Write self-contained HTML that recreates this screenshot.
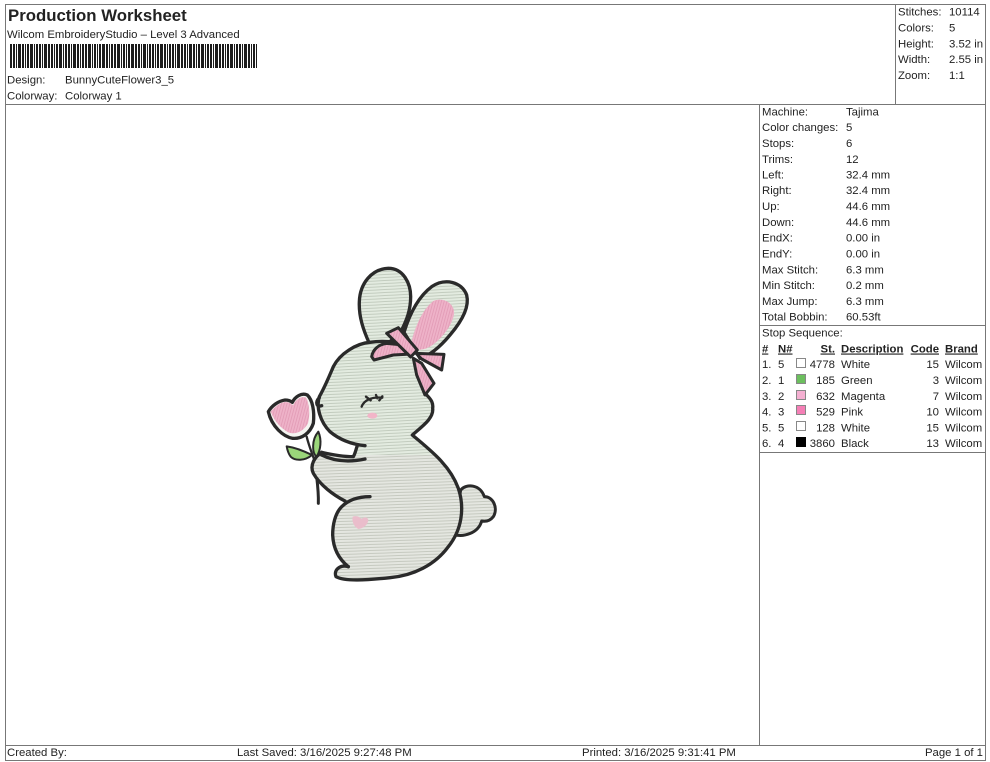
<!DOCTYPE html>
<html>
<head>
<meta charset="utf-8">
<title>Production Worksheet</title>
<style>
html,body{margin:0;padding:0;background:#fff;width:990px;height:762px;overflow:hidden}
svg{display:block}
text{font-family:"Liberation Sans",Arial,sans-serif;font-size:11.35px;fill:#222}
.b{font-weight:bold}
.e{text-anchor:end}
.u{text-decoration:underline;font-weight:bold}
</style>
</head>
<body>
<svg width="990" height="762" viewBox="0 0 990 762" xmlns="http://www.w3.org/2000/svg">
<defs>
<pattern id="st" width="12" height="9" patternUnits="userSpaceOnUse" patternTransform="rotate(-3)">
<rect width="12" height="9" fill="#e3ebe0"/>
<rect y="6.5" width="12" height="2.5" fill="#bcc6b8"/>
</pattern>
<pattern id="st2" width="12" height="9" patternUnits="userSpaceOnUse" patternTransform="rotate(-2)">
<rect width="12" height="9" fill="#e4e6e0"/>
<rect y="6.5" width="12" height="2.5" fill="#c0c4ba"/>
</pattern>
<pattern id="pk" width="8" height="8" patternUnits="userSpaceOnUse" patternTransform="rotate(15)">
<rect width="8" height="8" fill="#eeb2c8"/>
<rect x="5.5" width="2.5" height="8" fill="#e29bb6"/>
</pattern>
<clipPath id="low"><rect x="0" y="600" width="800" height="420"/></clipPath>
</defs>

<!-- frame -->
<g fill="none" stroke="#777" stroke-width="1">
<rect x="5.5" y="4.5" width="980" height="756"/>
<path d="M5 104.5H986M895.5 4V104M759.5 104V745M5 745.5H986M760 325.5H986M760 452.5H986"/>
</g>

<!-- header -->
<text class="b" x="8" y="21" style="font-size:16.8px">Production Worksheet</text>
<text x="7" y="38">Wilcom EmbroideryStudio – Level 3 Advanced</text>
<line x1="10" y1="56" x2="257" y2="56" stroke="#1c1c1c" stroke-width="24" stroke-dasharray="2 1 2 1 1 1 3 1 2 1 1 1 2 1 3 1 1 1 2 1 2 1 1 1 3 1 2 1 2 1 1 1 2 1 3 1 1 1 2 1 2 1 1 1 3 1 2 1 1 1 2 1 2 1 3 1 1 1 2 1 1 1 2 1 3 1 2 1 1 1 2 1 2 1 3 1 1 1 2 1 1 1 2 1 3 1 2 1 2 1 1 1 3 1 1 1 2 1 2 1 1 1 2 1 3 1 2 1 1 1 2 1 2 1 1 1 3 1"/>
<text x="7" y="83.5">Design:</text><text x="65" y="83.5">BunnyCuteFlower3_5</text>
<text x="7" y="99.5">Colorway:</text><text x="65" y="99.5">Colorway 1</text>

<!-- stats -->
<text x="898" y="15.5">Stitches:</text><text x="949" y="15.5">10114</text>
<text x="898" y="31.5">Colors:</text><text x="949" y="31.5">5</text>
<text x="898" y="47.5">Height:</text><text x="949" y="47.5">3.52 in</text>
<text x="898" y="63">Width:</text><text x="949" y="63">2.55 in</text>
<text x="898" y="79">Zoom:</text><text x="949" y="79">1:1</text>

<!-- machine -->
<text x="762" y="115.5">Machine:</text><text x="846" y="115.5">Tajima</text>
<text x="762" y="131">Color changes:</text><text x="846" y="131">5</text>
<text x="762" y="147">Stops:</text><text x="846" y="147">6</text>
<text x="762" y="163">Trims:</text><text x="846" y="163">12</text>
<text x="762" y="178.5">Left:</text><text x="846" y="178.5">32.4 mm</text>
<text x="762" y="194">Right:</text><text x="846" y="194">32.4 mm</text>
<text x="762" y="210">Up:</text><text x="846" y="210">44.6 mm</text>
<text x="762" y="226">Down:</text><text x="846" y="226">44.6 mm</text>
<text x="762" y="241.5">EndX:</text><text x="846" y="241.5">0.00 in</text>
<text x="762" y="257.5">EndY:</text><text x="846" y="257.5">0.00 in</text>
<text x="762" y="273.5">Max Stitch:</text><text x="846" y="273.5">6.3 mm</text>
<text x="762" y="289">Min Stitch:</text><text x="846" y="289">0.2 mm</text>
<text x="762" y="305">Max Jump:</text><text x="846" y="305">6.3 mm</text>
<text x="762" y="320.5">Total Bobbin:</text><text x="846" y="320.5">60.53ft</text>

<!-- stop sequence -->
<text x="762" y="336.5">Stop Sequence:</text>
<text class="u" x="762" y="352.5">#</text><text class="u" x="778" y="352.5">N#</text><text class="u e" x="835" y="352.5">St.</text><text class="u" x="841" y="352.5">Description</text><text class="u e" x="939" y="352.5">Code</text><text class="u" x="945" y="352.5">Brand</text>

<text x="762" y="368">1.</text><text x="778" y="368">5</text><text class="e" x="835" y="368">4778</text><text x="841" y="368">White</text><text class="e" x="939" y="368">15</text><text x="945" y="368">Wilcom</text>
<text x="762" y="384">2.</text><text x="778" y="384">1</text><text class="e" x="835" y="384">185</text><text x="841" y="384">Green</text><text class="e" x="939" y="384">3</text><text x="945" y="384">Wilcom</text>
<text x="762" y="400">3.</text><text x="778" y="400">2</text><text class="e" x="835" y="400">632</text><text x="841" y="400">Magenta</text><text class="e" x="939" y="400">7</text><text x="945" y="400">Wilcom</text>
<text x="762" y="415.5">4.</text><text x="778" y="415.5">3</text><text class="e" x="835" y="415.5">529</text><text x="841" y="415.5">Pink</text><text class="e" x="939" y="415.5">10</text><text x="945" y="415.5">Wilcom</text>
<text x="762" y="431.5">5.</text><text x="778" y="431.5">5</text><text class="e" x="835" y="431.5">128</text><text x="841" y="431.5">White</text><text class="e" x="939" y="431.5">15</text><text x="945" y="431.5">Wilcom</text>
<text x="762" y="447">6.</text><text x="778" y="447">4</text><text class="e" x="835" y="447">3860</text><text x="841" y="447">Black</text><text class="e" x="939" y="447">13</text><text x="945" y="447">Wilcom</text>

<g stroke="#888" stroke-width="1">
<rect x="796.5" y="358.5" width="9" height="9" fill="#fff"/>
<rect x="796.5" y="374.5" width="9" height="9" fill="#6cbf5e"/>
<rect x="796.5" y="390.5" width="9" height="9" fill="#f5b0d2"/>
<rect x="796.5" y="405.5" width="9" height="9" fill="#f57fb6"/>
<rect x="796.5" y="421.5" width="9" height="9" fill="#fff"/>
<rect x="796.5" y="437.5" width="9" height="9" fill="#000" stroke="#000"/>
</g>

<!-- footer -->
<text x="7" y="756">Created By:</text>
<text x="237" y="756">Last Saved: 3/16/2025 9:27:48 PM</text>
<text x="582" y="756">Printed: 3/16/2025 9:31:41 PM</text>
<text class="e" x="983" y="756">Page 1 of 1</text>

<!-- bunny: coords are 3x around origin 250,255 -->
<g transform="translate(250 255) scale(.33333)" stroke-linejoin="round" stroke-linecap="round">
<!-- ears -->
<path d="M358 265C340 225 326 185 328 140C330 85 365 42 415 40C460 40 482 85 482 125C482 165 470 195 455 225L415 265Z" fill="url(#st)" stroke="#2a2a2a" stroke-width="10"/>
<path d="M462 232C478 180 505 125 545 95C585 68 635 80 650 120C660 160 630 205 600 240C575 270 545 300 510 310Z" fill="url(#st)" stroke="#2a2a2a" stroke-width="10"/>
<path d="M482 275C490 225 515 165 550 138C580 125 615 145 612 178C605 215 575 250 545 272C525 285 500 290 482 275Z" fill="url(#pk)"/>

<!-- tail -->
<path d="M632 705C650 685 690 688 703 725C730 725 745 760 730 785C718 800 705 800 695 798C685 835 640 848 610 838Z" fill="url(#st2)" stroke="#2a2a2a" stroke-width="9"/>

<!-- stem below arm -->
<path d="M200 665C203 690 206 715 205 745" fill="none" stroke="#2a2a2a" stroke-width="9"/>

<!-- body + head silhouette -->
<path d="M360 262C320 265 270 295 250 335C235 370 225 395 208 425C198 455 210 500 240 530C270 555 305 568 345 572L322 572L310 605L215 592C195 605 178 630 190 655C210 690 250 720 285 738C262 760 248 800 248 840C250 885 270 915 295 935C270 928 250 945 258 965C285 980 350 975 420 968C490 962 555 930 595 875C635 825 645 760 625 700C600 630 540 585 487 540C515 515 552 490 548 455C540 430 525 410 518 390L495 310C470 280 420 258 360 262Z" fill="#dde3d9"/>
<path d="M360 262C320 265 270 295 250 335C235 370 225 395 208 425C198 455 210 500 240 530C270 555 305 568 345 572L322 572L310 605L215 592C195 605 178 630 190 655C210 690 250 720 285 738C262 760 248 800 248 840C250 885 270 915 295 935C270 928 250 945 258 965C285 980 350 975 420 968C490 962 555 930 595 875C635 825 645 760 625 700C600 630 540 585 487 540C515 515 552 490 548 455C540 430 525 410 518 390L495 310C470 280 420 258 360 262Z" fill="url(#st)"/>
<path d="M360 262C320 265 270 295 250 335C235 370 225 395 208 425C198 455 210 500 240 530C270 555 305 568 345 572L322 572L310 605L215 592C195 605 178 630 190 655C210 690 250 720 285 738C262 760 248 800 248 840C250 885 270 915 295 935C270 928 250 945 258 965C285 980 350 975 420 968C490 962 555 930 595 875C635 825 645 760 625 700C600 630 540 585 487 540C515 515 552 490 548 455C540 430 525 410 518 390L495 310C470 280 420 258 360 262Z" fill="url(#st2)" clip-path="url(#low)"/>

<!-- outlines -->
<g fill="none" stroke="#2a2a2a" stroke-width="10">
<path d="M440 262C410 258 385 258 360 262C320 265 270 295 250 335C235 370 225 395 208 425C198 455 210 500 240 530C270 555 305 568 345 572"/>
<path d="M530 420C545 435 550 445 548 460C552 490 515 515 487 540C540 585 600 630 625 700C645 760 635 825 595 875C555 930 490 962 420 968C350 975 285 980 258 965C250 945 270 928 295 935"/>
<path d="M360 725C325 725 295 735 275 755C255 775 248 810 248 840C250 885 270 915 295 935"/>
<path d="M215 592C250 600 280 605 310 605C316 595 318 582 322 572"/>
<path d="M215 600C245 615 285 625 345 612"/>
<path d="M215 592C195 605 178 630 190 655C210 690 250 720 285 738"/>
</g>

<!-- tulip -->
<path d="M55 470C65 452 85 438 105 435C115 435 122 438 127 442C135 425 155 412 172 420C188 435 194 470 190 505C180 535 155 552 128 550C100 545 65 515 55 470Z" fill="#f4f5f1" stroke="#2a2a2a" stroke-width="10"/>
<path d="M62 470C75 454 92 442 106 441C116 441 124 446 129 451C137 434 153 422 168 428C178 445 181 478 174 505C160 530 135 540 115 532C92 520 72 497 62 470Z" fill="url(#pk)"/>
<path d="M170 545C176 570 184 590 192 612" fill="none" stroke="#2a2a2a" stroke-width="7"/>

<!-- leaves -->
<path d="M205 530C216 555 212 585 200 605C186 595 184 555 205 530Z" fill="#9bd67a" stroke="#2a2a2a" stroke-width="6"/>
<path d="M110 574C140 578 170 592 186 600C165 618 135 618 122 605C115 596 112 585 110 574Z" fill="#9bd67a" stroke="#2a2a2a" stroke-width="6"/>
<path d="M208 428C196 440 198 458 215 452" fill="none" stroke="#2a2a2a" stroke-width="10"/>

<!-- eye -->
<path d="M335 455C342 435 365 425 397 428M348 425L362 436M378 420L382 430M397 424L388 436" fill="none" stroke="#2a2a2a" stroke-width="7"/>
<ellipse cx="367" cy="482" rx="15" ry="9" fill="#f2b5c8"/>
<!-- belly heart -->
<path d="M308 785C322 780 330 788 335 792C345 782 358 788 354 800C350 812 340 820 325 822C312 815 305 800 308 785Z" fill="#eabdcb"/>

<!-- bow -->
<path d="M365 305C368 285 385 268 410 265L460 270L485 297L430 300L372 315Z" fill="url(#pk)" stroke="#2a2a2a" stroke-width="9"/>
<path d="M410 235L445 218L502 285L482 306Z" fill="url(#pk)" stroke="#2a2a2a" stroke-width="9"/>
<path d="M498 295L582 298L575 345L515 312Z" fill="url(#pk)" stroke="#2a2a2a" stroke-width="9"/>
<path d="M490 310L515 325L552 385L525 420L500 360Z" fill="url(#pk)" stroke="#2a2a2a" stroke-width="9"/>
</g>
</svg>
</body>
</html>
